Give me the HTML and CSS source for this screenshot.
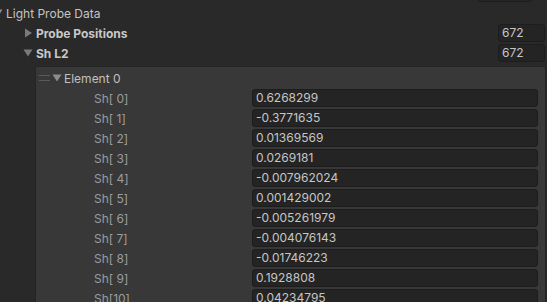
FILE: index.html
```html
<!doctype html>
<html lang="en">
<head>
	<meta charset="UTF-8">
	<title>Light Probe Data</title>
	<link rel="stylesheet" href="styles.css">
</head>
<body>
	<div class="inspector">
		<div class="row">
			<span class="field field-top"></span>
		</div>
		<div class="row row-root">
			<span class="arrow"><svg width="10" height="8" viewBox="0 0 10 8"><path d="M0.5 0.5h9l-4.5 7z" fill="#8c8c8c"/></svg></span>
			<span class="label">Light Probe Data</span>
		</div>
		<div class="row row-child">
			<span class="arrow"><svg width="10" height="10" viewBox="0 0 10 10"><path d="M2 0.5v9l7-4.5z" fill="#7a7a7a"/></svg></span>
			<span class="label bold">Probe Positions</span>
			<span class="field field-size">672</span>
		</div>
		<div class="row row-child">
			<span class="arrow"><svg width="10" height="8" viewBox="0 0 10 8"><path d="M0.5 0.5h9l-4.5 7z" fill="#7a7a7a"/></svg></span>
			<span class="label bold">Sh L2</span>
			<span class="field field-size">672</span>
		</div>

		<div class="panel">
			<div class="row row-element">
				<span class="handle"></span>
				<span class="arrow"><svg width="10" height="8" viewBox="0 0 10 8"><path d="M0.5 0.5h9l-4.5 7z" fill="#8c8c8c"/></svg></span>
				<span class="label">Element 0</span>
			</div>
			<div class="row row-sh"><span class="sh-label">Sh[ 0]</span><span class="field field-value">0.6268299</span></div>
			<div class="row row-sh"><span class="sh-label">Sh[ 1]</span><span class="field field-value">-0.3771635</span></div>
			<div class="row row-sh"><span class="sh-label">Sh[ 2]</span><span class="field field-value">0.01369569</span></div>
			<div class="row row-sh"><span class="sh-label">Sh[ 3]</span><span class="field field-value">0.0269181</span></div>
			<div class="row row-sh"><span class="sh-label">Sh[ 4]</span><span class="field field-value">-0.007962024</span></div>
			<div class="row row-sh"><span class="sh-label">Sh[ 5]</span><span class="field field-value">0.001429002</span></div>
			<div class="row row-sh"><span class="sh-label">Sh[ 6]</span><span class="field field-value">-0.005261979</span></div>
			<div class="row row-sh"><span class="sh-label">Sh[ 7]</span><span class="field field-value">-0.004076143</span></div>
			<div class="row row-sh"><span class="sh-label">Sh[ 8]</span><span class="field field-value">-0.01746223</span></div>
			<div class="row row-sh"><span class="sh-label">Sh[ 9]</span><span class="field field-value">0.1928808</span></div>
			<div class="row row-sh"><span class="sh-label">Sh[10]</span><span class="field field-value">0.04234795</span></div>
		</div>
	</div>
</body>
</html>
```
FILE: styles.css
```css
html, body {
	margin: 0;
	height: 100%;
	overflow: hidden;
	background-color: #292929;
}
.inspector {
	margin-top: -17px;
	font-family: "Inter", "Noto Sans", sans-serif;
	font-size: 12px;
	color: #c4c4c4;
}
.row {
	display: flex;
	align-items: center;
	height: 20px;
	white-space: nowrap;
}
.arrow {
	display: flex;
	align-items: center;
	justify-content: center;
	width: 10px;
	height: 10px;
	margin-right: 3px;
}
.row-root {
	margin-left: -7px;
}
.row-child {
	padding-left: 23px;
}
.bold {
	font-weight: bold;
	color: #c8c8c8;
}
.label {
	flex: 1;
}
.field {
	box-sizing: border-box;
	height: 18px;
	line-height: 16px;
	padding-left: 3px;
	border: 1px solid #1d1d1d;
	border-radius: 3px;
	background-color: #242424;
	color: #c6c6c6;
	overflow: hidden;
}
.field-top {
	margin-left: 478px;
	width: 55px;
}
.field-size {
	width: 47px;
	margin-right: 2px;
}
.panel {
	margin: 3px 1px 0 35px;
	border: 1px solid #242424;
	background-color: #383838;
	padding-top: 1px;
}
.row-element {
	padding-left: 3px;
	color: #c0c0c0;
}
.handle {
	width: 11px;
	height: 4px;
	margin-right: 2px;
	border-top: 1px solid #5a5a5a;
	border-bottom: 1px solid #5a5a5a;
}
.row-element .arrow {
	width: 10px;
	margin-right: 2px;
}
.row-sh {
	padding-left: 58px;
}
.sh-label {
	width: 158px;
	color: #9c9c9c;
}
.field-value {
	width: 286px;
}
```
